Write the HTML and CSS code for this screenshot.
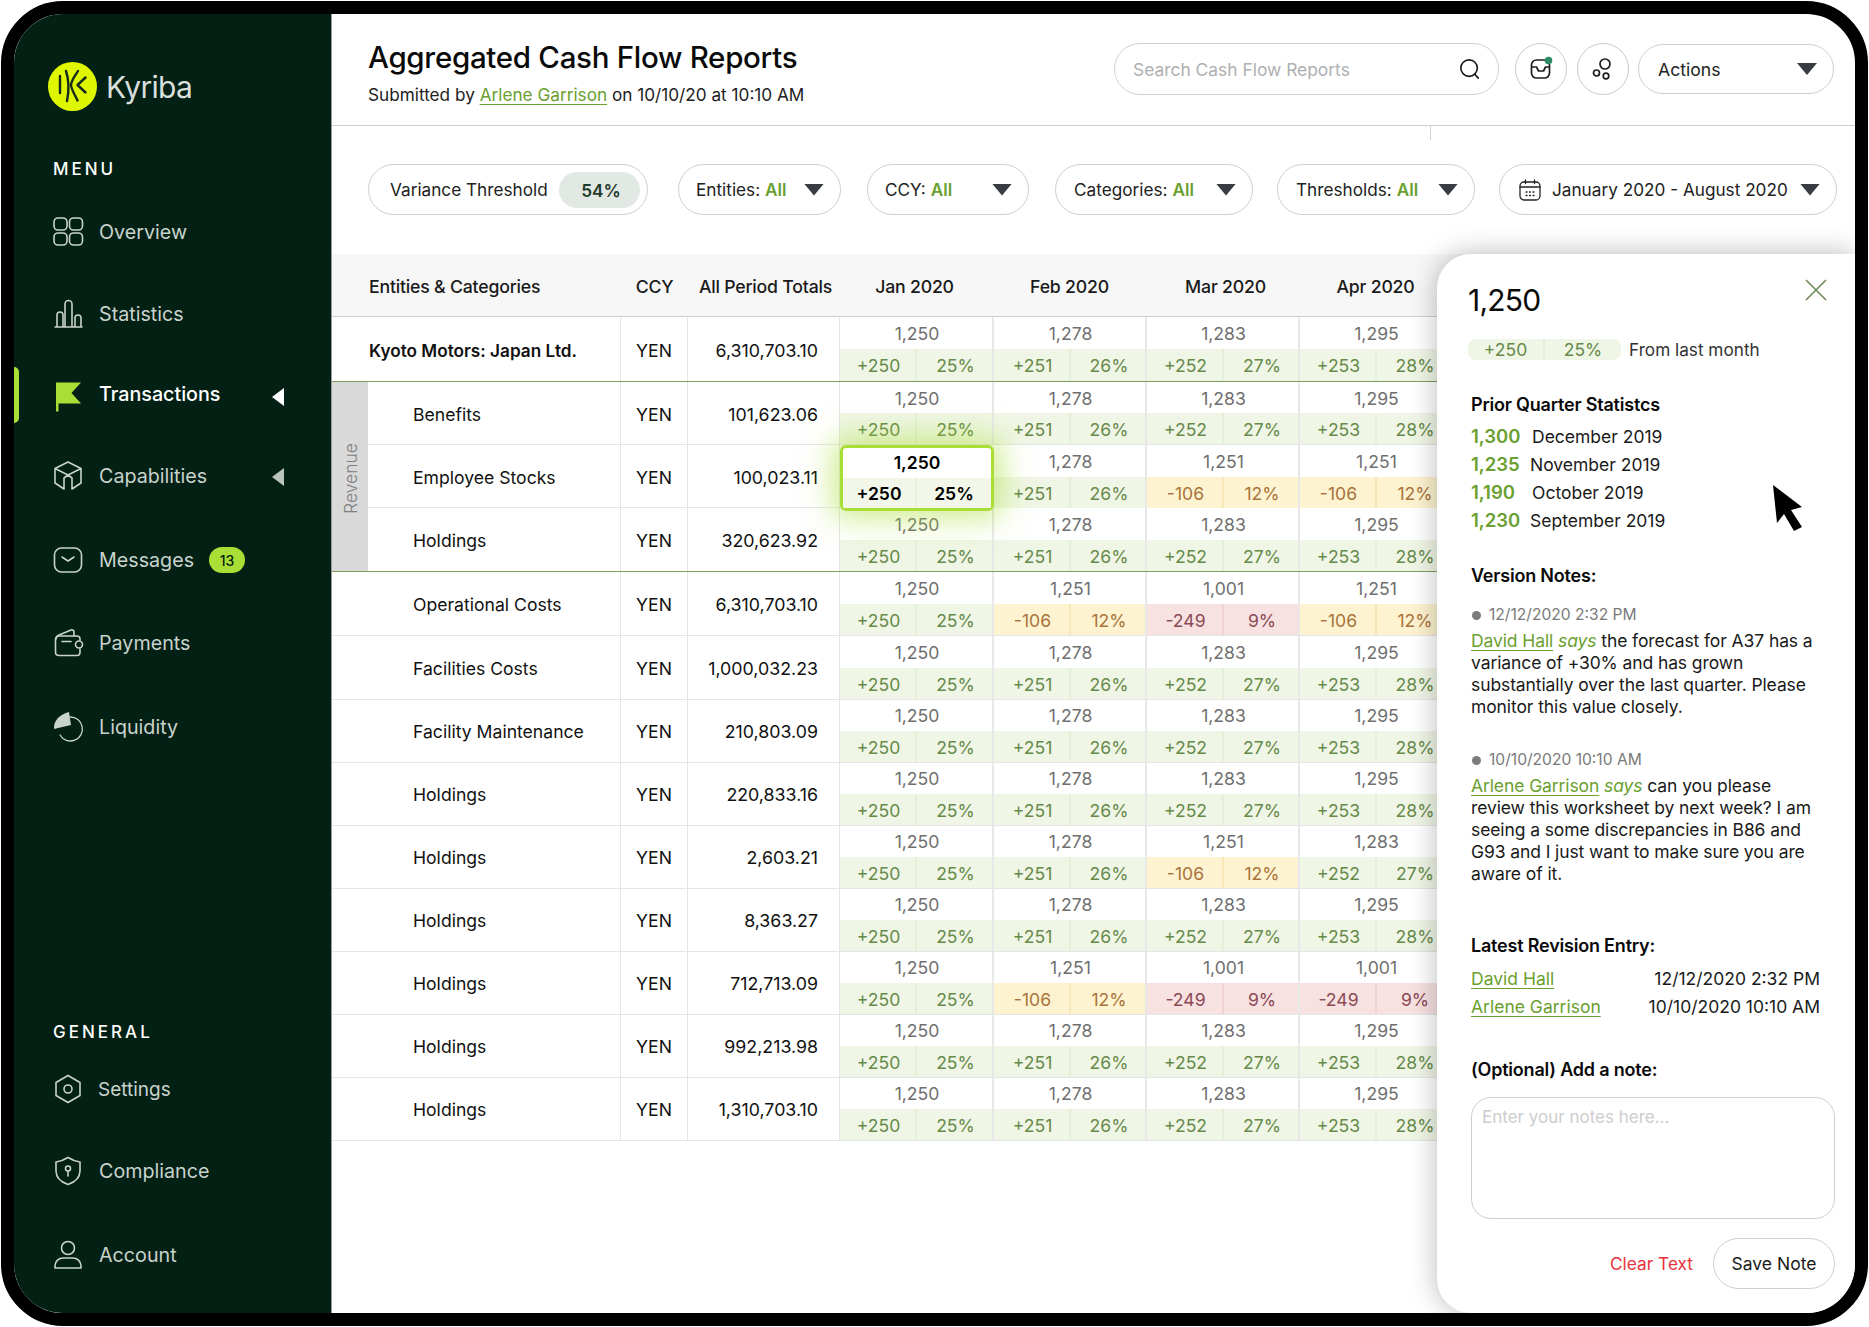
FILE: index.html
```html
<!DOCTYPE html>
<html lang="en">
<head>
<meta charset="utf-8">
<title>Aggregated Cash Flow Reports</title>
<link rel="stylesheet" href="styles.css">
</head>
<body>
<div class="device">
  <aside class="sidebar">
    <div class="brand">
      <svg class="logo" viewBox="0 0 49 49"><circle cx="24.5" cy="24.5" r="24.5" fill="#def700"/><g fill="none" stroke="#17291f" stroke-width="2.4" stroke-linecap="round" stroke-linejoin="round"><path d="M12 14v17"/><path d="M18 9c3 9 3 20 1 30"/><path d="M30 9c-3 5-6.500 9-7 14 .5 5 4 10 6.500 15.500"/><path d="M37.500 15.500 29.500 23l8 7.500"/></g></svg>
      <span class="brand-name">Kyriba</span>
    </div>
    <div class="nav-title">MENU</div>
    <nav class="nav nav-main">
      <a class="nav-item"><svg class="ico" viewBox="0 0 30 30"><rect x="1" y="1" width="13" height="12" rx="4"/><rect x="16.500" y="1" width="13" height="12" rx="4"/><rect x="1" y="16" width="13" height="12" rx="4"/><rect x="16.500" y="16" width="13" height="12" rx="4"/></svg>Overview</a>
      <a class="nav-item"><svg class="ico" viewBox="0 0 30 30"><path d="M2 28h27M4 28V16a3 3 0 0 1 6 0v12M12 28V5a3.500 3.500 0 0 1 7 0v23M22 28V19a2.500 2.500 0 0 1 6 0v9"/></svg>Statistics</a>
      <a class="nav-item nav-active"><span class="active-bar"></span><svg class="ico ico-flag" viewBox="0 0 30 30"><path d="M3 3.500H28L18.500 14 28 24.500H5.500V32.500H3z"/></svg>Transactions<span class="tri tri-on"></span></a>
      <a class="nav-item"><svg class="ico" viewBox="0 0 30 30"><path d="M15 1 28 7.500 15 14 2 7.500zM2 7.500V22l9 6V17M28 7.500V22l-9 6V17M11 17l4-3 4 3"/></svg>Capabilities<span class="tri"></span></a>
      <a class="nav-item"><svg class="ico" viewBox="0 0 30 30"><rect x="1.500" y="3" width="27" height="24" rx="7"/><path d="m9 12 6 4 6-4"/></svg>Messages<span class="badge">13</span></a>
      <a class="nav-item"><svg class="ico" viewBox="0 0 30 30"><path d="M3 11c0-2 1-3 3-4l12-5c1.500-.5 3 .5 3 2v4"/><path d="M27 12V11c0-2-1.500-3-3.500-3H6c-2 0-3.500 1.500-3.500 3.500V24c0 2 1.500 3.500 3.500 3.500h18c2 0 3-1.500 3-3.500v-3"/><circle cx="26" cy="16.500" r="3.500"/><path d="M9 13.500h9"/></svg>Payments</a>
      <a class="nav-item"><svg class="ico ico-pie" viewBox="0 0 30 30"><path class="pie-ring" d="M17 5a12 12 0 1 1-10 18"/><path class="pie-fill" d="M16 0 18 13 1 17C0 9 7 2 16 0z"/></svg>Liquidity</a>
    </nav>
    <div class="nav-title nav-title-general">GENERAL</div>
    <nav class="nav nav-general">
      <a class="nav-item"><svg class="ico" viewBox="0 0 30 30"><path d="m15 1.500 12 7v13l-12 7-12-7v-13z"/><circle cx="15" cy="15" r="4"/></svg><span class="nudge">Settings</span></a>
      <a class="nav-item"><svg class="ico" viewBox="0 0 30 30"><path d="M15 1.500c4 2.500 8 4 12 4.500v9c0 6-5 11-12 13.500C8 26 3 21 3 15V6c4-.5 8-2 12-4.500z"/><circle cx="15" cy="12.500" r="2.500"/><path d="M15 15v5"/></svg>Compliance</a>
      <a class="nav-item"><svg class="ico" viewBox="0 0 30 30"><circle cx="15" cy="8" r="6.500"/><path d="M2 28v-2c0-5 4-8 8-8h10c4 0 8 3 8 8v2z"/></svg>Account</a>
    </nav>
  </aside>

  <main class="main">
    <header class="topbar">
      <div class="heading">
        <h1 class="title">Aggregated Cash Flow Reports</h1>
        <p class="subtitle">Submitted by <a class="link">Arlene Garrison</a> on 10/10/20 at 10:10 AM</p>
      </div>
      <div class="search"><span class="search-text">Search Cash Flow Reports</span><svg class="search-ico" viewBox="0 0 24 24"><circle cx="11" cy="11" r="9"/><path d="m17.500 18 3.500 4"/></svg></div>
      <button class="round"><svg class="round-ico" viewBox="0 0 26 26"><path d="M3.500 9a5 5 0 0 1 5-5h8a5 5 0 0 1 5 5v8a5 5 0 0 1-5 5h-8a5 5 0 0 1-5-5z"/><path d="M3.500 11h5l2 4h5l2-4h4"/><circle class="dot" cx="20.500" cy="4.500" r="3.800"/></svg></button>
      <button class="round"><svg class="round-ico" viewBox="0 0 26 26"><circle cx="15" cy="8" r="5"/><circle cx="6.500" cy="17" r="3"/><circle cx="16" cy="20" r="2.800"/></svg></button>
      <button class="pill actions">Actions<span class="caret caret-end"></span></button>
    </header>
    <div class="tick"></div>

    <section class="filters">
      <div class="pill f-var">Variance Threshold<span class="pct">54%</span></div>
      <div class="pill f-ent">Entities: <b class="all">All</b><span class="caret"></span></div>
      <div class="pill f-ccy">CCY: <b class="all">All</b><span class="caret"></span></div>
      <div class="pill f-cat">Categories: <b class="all">All</b><span class="caret"></span></div>
      <div class="pill f-thr">Thresholds: <b class="all">All</b><span class="caret"></span></div>
      <div class="pill f-date"><svg class="cal" viewBox="0 0 22 22"><rect x="1" y="3" width="20" height="18" rx="4"/><path d="M1 8h20M6.500 1v3.500M15.500 1v3.500M7 13h1M10.500 13h1M14 13h1M7 16.500h1M10.500 16.500h1M14 16.500h1"/></svg>January 2020 - August 2020<span class="caret"></span></div>
    </section>

    <section class="table">
      <div class="row head">
        <div class="hc hc-name">Entities &amp; Categories</div><div class="hc">CCY</div><div class="hc">All Period Totals</div><div class="hc">Jan 2020</div><div class="hc">Feb 2020</div><div class="hc">Mar 2020</div><div class="hc">Apr 2020</div>
      </div>
      <div class="row r-65 low">
        <div class="c name strong">Kyoto Motors: Japan Ltd.</div><div class="c ccy">YEN</div><div class="c total">6,310,703.10</div>
        <div class="m"><div class="v">1,250</div><div class="d"><span>+250</span><span>25%</span></div></div>
        <div class="m"><div class="v">1,278</div><div class="d"><span>+251</span><span>26%</span></div></div>
        <div class="m"><div class="v">1,283</div><div class="d"><span>+252</span><span>27%</span></div></div>
        <div class="m"><div class="v">1,295</div><div class="d"><span>+253</span><span>28%</span></div></div>
      </div>
      <div class="group">
        <div class="group-label"><span class="group-text">Revenue</span></div>
        <div class="group-rows">
          <div class="row sub low">
            <div class="c name">Benefits</div><div class="c ccy">YEN</div><div class="c total">101,623.06</div>
            <div class="m"><div class="v">1,250</div><div class="d"><span>+250</span><span>25%</span></div></div>
            <div class="m"><div class="v">1,278</div><div class="d"><span>+251</span><span>26%</span></div></div>
            <div class="m"><div class="v">1,283</div><div class="d"><span>+252</span><span>27%</span></div></div>
            <div class="m"><div class="v">1,295</div><div class="d"><span>+253</span><span>28%</span></div></div>
          </div>
          <div class="row sub low">
            <div class="c name">Employee Stocks</div><div class="c ccy">YEN</div><div class="c total">100,023.11</div>
            <div class="m selected"><div class="v">1,250</div><div class="d"><span>+250</span><span>25%</span></div></div>
            <div class="m"><div class="v">1,278</div><div class="d"><span>+251</span><span>26%</span></div></div>
            <div class="m"><div class="v">1,251</div><div class="d warn"><span>-106</span><span>12%</span></div></div>
            <div class="m"><div class="v">1,251</div><div class="d warn"><span>-106</span><span>12%</span></div></div>
          </div>
          <div class="row sub r-64 last low">
            <div class="c name">Holdings</div><div class="c ccy">YEN</div><div class="c total">320,623.92</div>
            <div class="m"><div class="v">1,250</div><div class="d"><span>+250</span><span>25%</span></div></div>
            <div class="m"><div class="v">1,278</div><div class="d"><span>+251</span><span>26%</span></div></div>
            <div class="m"><div class="v">1,283</div><div class="d"><span>+252</span><span>27%</span></div></div>
            <div class="m"><div class="v">1,295</div><div class="d"><span>+253</span><span>28%</span></div></div>
          </div>
        </div>
      </div>
      <div class="row r-64 low">
        <div class="c name indent">Operational Costs</div><div class="c ccy">YEN</div><div class="c total">6,310,703.10</div>
        <div class="m"><div class="v">1,250</div><div class="d"><span>+250</span><span>25%</span></div></div>
        <div class="m"><div class="v">1,251</div><div class="d warn"><span>-106</span><span>12%</span></div></div>
        <div class="m"><div class="v">1,001</div><div class="d bad"><span>-249</span><span>9%</span></div></div>
        <div class="m"><div class="v">1,251</div><div class="d warn"><span>-106</span><span>12%</span></div></div>
      </div>
      <div class="row r-64 low">
        <div class="c name indent">Facilities Costs</div><div class="c ccy">YEN</div><div class="c total">1,000,032.23</div>
        <div class="m"><div class="v">1,250</div><div class="d"><span>+250</span><span>25%</span></div></div>
        <div class="m"><div class="v">1,278</div><div class="d"><span>+251</span><span>26%</span></div></div>
        <div class="m"><div class="v">1,283</div><div class="d"><span>+252</span><span>27%</span></div></div>
        <div class="m"><div class="v">1,295</div><div class="d"><span>+253</span><span>28%</span></div></div>
      </div>
      <div class="row">
        <div class="c name indent">Facility Maintenance</div><div class="c ccy">YEN</div><div class="c total">210,803.09</div>
        <div class="m"><div class="v">1,250</div><div class="d"><span>+250</span><span>25%</span></div></div>
        <div class="m"><div class="v">1,278</div><div class="d"><span>+251</span><span>26%</span></div></div>
        <div class="m"><div class="v">1,283</div><div class="d"><span>+252</span><span>27%</span></div></div>
        <div class="m"><div class="v">1,295</div><div class="d"><span>+253</span><span>28%</span></div></div>
      </div>
      <div class="row">
        <div class="c name indent">Holdings</div><div class="c ccy">YEN</div><div class="c total">220,833.16</div>
        <div class="m"><div class="v">1,250</div><div class="d"><span>+250</span><span>25%</span></div></div>
        <div class="m"><div class="v">1,278</div><div class="d"><span>+251</span><span>26%</span></div></div>
        <div class="m"><div class="v">1,283</div><div class="d"><span>+252</span><span>27%</span></div></div>
        <div class="m"><div class="v">1,295</div><div class="d"><span>+253</span><span>28%</span></div></div>
      </div>
      <div class="row">
        <div class="c name indent">Holdings</div><div class="c ccy">YEN</div><div class="c total">2,603.21</div>
        <div class="m"><div class="v">1,250</div><div class="d"><span>+250</span><span>25%</span></div></div>
        <div class="m"><div class="v">1,278</div><div class="d"><span>+251</span><span>26%</span></div></div>
        <div class="m"><div class="v">1,251</div><div class="d warn"><span>-106</span><span>12%</span></div></div>
        <div class="m"><div class="v">1,283</div><div class="d"><span>+252</span><span>27%</span></div></div>
      </div>
      <div class="row">
        <div class="c name indent">Holdings</div><div class="c ccy">YEN</div><div class="c total">8,363.27</div>
        <div class="m"><div class="v">1,250</div><div class="d"><span>+250</span><span>25%</span></div></div>
        <div class="m"><div class="v">1,278</div><div class="d"><span>+251</span><span>26%</span></div></div>
        <div class="m"><div class="v">1,283</div><div class="d"><span>+252</span><span>27%</span></div></div>
        <div class="m"><div class="v">1,295</div><div class="d"><span>+253</span><span>28%</span></div></div>
      </div>
      <div class="row">
        <div class="c name indent">Holdings</div><div class="c ccy">YEN</div><div class="c total">712,713.09</div>
        <div class="m"><div class="v">1,250</div><div class="d"><span>+250</span><span>25%</span></div></div>
        <div class="m"><div class="v">1,251</div><div class="d warn"><span>-106</span><span>12%</span></div></div>
        <div class="m"><div class="v">1,001</div><div class="d bad"><span>-249</span><span>9%</span></div></div>
        <div class="m"><div class="v">1,001</div><div class="d bad"><span>-249</span><span>9%</span></div></div>
      </div>
      <div class="row">
        <div class="c name indent">Holdings</div><div class="c ccy">YEN</div><div class="c total">992,213.98</div>
        <div class="m"><div class="v">1,250</div><div class="d"><span>+250</span><span>25%</span></div></div>
        <div class="m"><div class="v">1,278</div><div class="d"><span>+251</span><span>26%</span></div></div>
        <div class="m"><div class="v">1,283</div><div class="d"><span>+252</span><span>27%</span></div></div>
        <div class="m"><div class="v">1,295</div><div class="d"><span>+253</span><span>28%</span></div></div>
      </div>
      <div class="row">
        <div class="c name indent">Holdings</div><div class="c ccy">YEN</div><div class="c total">1,310,703.10</div>
        <div class="m"><div class="v">1,250</div><div class="d"><span>+250</span><span>25%</span></div></div>
        <div class="m"><div class="v">1,278</div><div class="d"><span>+251</span><span>26%</span></div></div>
        <div class="m"><div class="v">1,283</div><div class="d"><span>+252</span><span>27%</span></div></div>
        <div class="m"><div class="v">1,295</div><div class="d"><span>+253</span><span>28%</span></div></div>
      </div>
    </section>

    <aside class="panel">
      <div class="panel-head">
        <div class="panel-value">1,250</div>
        <svg class="close" viewBox="0 0 22 22"><path d="m1 1 20 20M21 1 1 21"/></svg>
      </div>
      <div class="delta-line"><div class="delta-pill"><span>+250</span><span>25%</span></div><span class="from">From last month</span></div>
      <h3 class="ph ph-prior">Prior Quarter Statistcs</h3>
      <div class="stats">
        <div class="stat"><b>1,300</b><span>December 2019</span></div>
        <div class="stat stat-tight"><b>1,235</b><span>November 2019</span></div>
        <div class="stat"><b>1,190</b><span>October 2019</span></div>
        <div class="stat stat-tight"><b>1,230</b><span>September 2019</span></div>
      </div>
      <h3 class="ph ph-notes">Version Notes:</h3>
      <div class="note-date note-date-1"><i class="bullet"></i>12/12/2020 2:32 PM</div>
      <p class="note"><a class="link">David Hall</a> <em class="says">says</em> the forecast for A37 has a<br>variance of +30% and has grown<br>substantially over the last quarter. Please<br>monitor this value closely.</p>
      <div class="note-date note-date-2"><i class="bullet"></i>10/10/2020 10:10 AM</div>
      <p class="note"><a class="link">Arlene Garrison</a> <em class="says">says</em> can you please<br>review this worksheet by next week? I am<br>seeing a some discrepancies in B86 and<br>G93 and I just want to make sure you are<br>aware of it.</p>
      <h3 class="ph ph-rev">Latest Revision Entry:</h3>
      <div class="rev"><a class="link">David Hall</a><span>12/12/2020 2:32 PM</span></div>
      <div class="rev"><a class="link">Arlene Garrison</a><span>10/10/2020 10:10 AM</span></div>
      <h3 class="ph ph-add">(Optional) Add a note:</h3>
      <div class="textarea">Enter your notes here...</div>
      <div class="panel-actions"><span class="clear">Clear Text</span><button class="save">Save Note</button></div>
      <svg class="cursor" viewBox="0 0 30 46"><path d="M0 0 29 22 18 25 29 42 21 46 11 29 4 38z"/></svg>
    </aside>
  </main>
</div>
</body>
</html>
```
FILE: styles.css
```css
* { box-sizing: border-box; }
html, body { margin: 0; padding: 0; background: #fff; }
body { font-family: Inter, "Liberation Sans", sans-serif; color: #111; font-size: 17.5px; }
button { font: inherit; color: inherit; background: none; }
h1, h3, p { margin: 0; }

.device {
  width: 1867px; height: 1325px; margin: 1px;
  border: 13px solid #000; border-radius: 62px;
  background: #fff; display: flex; overflow: hidden;
}

/* Sidebar */
.sidebar { width: 317px; flex: none; background: #032014; padding: 48px 0 37px 0; display: flex; flex-direction: column; position: relative; }
.brand { display: flex; align-items: center; padding-left: 34px; height: 49px; gap: 9px; }
.logo { width: 49px; height: 49px; flex: none; }
.brand-name { font-size: 30px; color: #d9dfdb; letter-spacing: -.7px; font-weight: 400; }
.nav-title { color: #fff; font-size: 17px; font-weight: 500; letter-spacing: 3px; padding-left: 39px; margin-top: 47px; line-height: 22px; }
.nav-title-general { margin-top: auto; }
.nav { display: grid; }
.nav-main { grid-template-rows: 82px 80px 82px 84px 83px 84px 42px; margin-top: 31px; }
.nav-general { grid-template-rows: 82px 84px 42px; margin-top: 25px; }
.nav-item { display: flex; align-items: center; color: #c9d3cd; font-size: 19.7px; padding-left: 39px; position: relative; height: 42px; align-self: start; }
.ico { width: 30px; height: 30px; flex: none; margin-right: 16px; fill: none; stroke: #c9d3cd; stroke-width: 1.6; stroke-linecap: round; stroke-linejoin: round; overflow: visible; }
.nav-active { color: #fff; font-weight: 500; }
.active-bar { width: 5px; height: 56px; background: #a9de37; border-radius: 0 5px 5px 0; position: absolute; left: 0; top: -6px; }
.ico-flag { fill: #a9de37; stroke: none; }
.pie-ring { stroke-width: 1.3; }
.pie-fill { fill: #c9d3cd; stroke: none; }
.nudge { margin-left: -1px; font-size: 19px; }
.tri { width: 0; height: 0; border-style: solid; border-width: 9px 12px 9px 0; border-color: transparent #b9c4bd transparent transparent; position: absolute; left: 258px; top: 13px; }
.tri-on { border-right-color: #fff; top: 15px; }
.badge { background: #a9de37; color: #04200f; font-size: 14px; font-weight: 500; border-radius: 13px; width: 36px; height: 26px; display: flex; align-items: center; justify-content: center; margin-left: 15px; }

/* Main */
.main { flex: 1; border-left: 1px solid #9a9a9a; position: relative; min-width: 0; }
.topbar { height: 112px; border-bottom: 1px solid #cfcfcf; display: flex; align-items: flex-start; padding: 28px 21px 0 36px; }
.heading { margin-right: auto; }
.title { font-size: 29.5px; font-weight: 500; letter-spacing: -.3px; line-height: 30px; color: #0a0a0a; }
.subtitle { font-size: 17.2px; line-height: 22px; margin-top: 12px; color: #222; }
.link { color: #6aa030; text-decoration: underline; text-underline-offset: 3px; text-decoration-thickness: 1px; }
.search { width: 385px; height: 52px; margin-top: 1px; border: 1px solid #cfd2d4; border-radius: 26px; display: flex; align-items: center; justify-content: space-between; padding: 0 17px 0 18px; }
.search-text { color: #aeb0b2; font-size: 17.4px; }
.search-ico { width: 22px; height: 22px; fill: none; stroke: #1a1a1a; stroke-width: 1.8; stroke-linecap: round; }
.round { width: 52px; height: 52px; margin-top: 1px; border: 1px solid #c9cbcc; border-radius: 50%; margin-left: 16px; padding: 0; display: flex; align-items: center; justify-content: center; }
.round + .round { margin-left: 10px; }
.round-ico { width: 26px; height: 26px; fill: none; stroke: #1d1d1d; stroke-width: 1.7; stroke-linejoin: round; }
.dot { fill: #2d8a66; stroke: none; }
.pill { border: 1px solid #cfcfcf; border-radius: 26px; height: 51px; display: flex; align-items: center; position: relative; background: #fff; color: #222; font-size: 17.2px; }
.actions { width: 196px; margin-left: 9px; margin-top: 2px; height: 50px; padding: 0 0 0 19px; font-size: 17.6px; }
.caret { width: 20px; height: 12px; background: #383d44; clip-path: polygon(0 0, 100% 0, 50% 100%); margin-left: auto; margin-right: 16px; flex: none; }
.tick { width: 1px; height: 14px; background: #d4d4d4; margin-left: 1098px; }

.filters { display: flex; padding: 38px 0 0 36px; height: 128px; margin-top: -14px; align-items: flex-start; }
.all { color: #6aa030; font-weight: 600; margin-left: 5px; }
.f-var { width: 280px; padding-left: 21px; margin-right: 30px; }
.pct { width: 81px; height: 36px; padding-left: 3px; background: #e2e8e3; color: #1e3a2a; font-weight: 600; border-radius: 18px; display: flex; align-items: center; justify-content: center; position: absolute; right: 7px; top: 7px; }
.f-ent { width: 163px; padding-left: 17px; margin-right: 26px; }
.f-ccy { width: 162px; padding-left: 17px; margin-right: 26px; }
.f-cat { width: 198px; padding-left: 18px; margin-right: 24px; }
.f-thr { width: 198px; padding-left: 18px; margin-right: 24px; }
.f-date { width: 338px; padding-left: 19px; }
.cal { width: 22px; height: 22px; margin-right: 11px; fill: none; stroke: #222; stroke-width: 1.3; stroke-linecap: round; flex: none; }

/* Table */
.row { display: grid; grid-template-columns: 289px 67px 152px 154px 153px 153px 153px; height: 63px; border-bottom: 1px solid #e5e5e5; width: 100%; font-size: 17.6px; }
.r-64 { height: 64px; }
.r-65 { height: 65px; border-bottom: 1px solid #7c9f5c; }
.head { background: #f7f7f7; border-bottom: 1px solid #cfcfcf; height: 63px; font-weight: 500; padding-top: 3px; }
.hc { display: flex; align-items: center; justify-content: center; color: #1a1a1a; font-size: 17.7px; letter-spacing: -.2px; white-space: nowrap; }
.hc-name { justify-content: flex-start; padding-left: 37px; }
.hc:nth-child(3) { padding-left: 3px; }
.hc:nth-child(4) { padding-right: 5px; }
.hc:nth-child(5) { padding-right: 2px; }
.hc:nth-child(6) { padding-left: 4px; }
.hc:nth-child(7) { padding-right: 2px; }
.c { display: flex; align-items: center; border-right: 1px solid #e5e5e5; color: #111; }
.name { padding-left: 37px; }
.strong { font-weight: 600; font-size: 17.2px; }
.indent { padding-left: 81px; }
.ccy { justify-content: center; }
.total { justify-content: flex-end; padding-right: 21px; font-size: 17.8px; }
.low .c, .low .v { padding-top: 1px; }
.r-65 .c, .group-rows .row:first-child .c { padding-top: 3px; }
.m { display: flex; flex-direction: column; border-right: 2px solid #e8e8e8; position: relative; }
.v { flex: 1; display: flex; align-items: center; justify-content: center; color: #6f6f6f; padding-left: 2px; }
.low .v { padding-left: 2px; }
.d { height: 31px; display: grid; grid-template-columns: 77px 1fr; background: #f0f6e6; color: #668a4a; }
.r-65 .d { height: 32px; }
.d span { display: flex; align-items: center; justify-content: center; padding: 1px 0 0 2px; }
.d span:first-child { border-right: 2px solid #e6efd9; }
.warn { background: #fdf3d0; color: #a9733b; }
.warn span:first-child { border-right-color: #f7e7b8; }
.bad { background: #f7e1e1; color: #8b4a55; }
.bad span:first-child { border-right-color: #f0d2d2; }
.group { display: flex; border-bottom: 1px solid #7c9f5c; }
.group-label { width: 36px; flex: none; background: #d9d9d9; display: flex; align-items: center; justify-content: center; padding-top: 4px; }
.group-text { writing-mode: vertical-rl; transform: rotate(180deg); font-size: 17.5px; font-weight: 300; color: #7f7f7f; }
.group-rows { flex: 1; min-width: 0; }
.sub { grid-template-columns: 253px 67px 152px 154px 153px 153px 153px; }
.sub .name { padding-left: 45px; }
.last { border-bottom: none; height: 63px; }
.selected { border: 3px solid #a9de37; border-radius: 6px; height: 66px; margin-bottom: -3px; background: #fff; box-shadow: 0 0 30px 8px rgba(169, 222, 55, .55); z-index: 2; }
.selected .v { color: #000; font-weight: 600; padding: 0 0 2px; }
.selected .d { color: #000; font-weight: 600; height: 30px; grid-template-columns: 74px 1fr; background: #f2f7e9; }
.selected .d span { padding: 0; }
.selected .d span:first-child { border-right-color: #e9f1dd; }

/* Panel */
.panel { position: absolute; left: 1105px; top: 240px; width: 418px; height: 1059px; background: #fff; border-radius: 34px 0 0 34px; box-shadow: 0 0 28px rgba(0, 0, 0, .28); padding: 27px 20px 0 34px; z-index: 5; }
.panel-head { display: flex; justify-content: space-between; margin-left: -3px; height: 45px; align-items: flex-start; padding-right: 8px; }
.panel-value { font-size: 30px; letter-spacing: -.8px; line-height: 38px; color: #0a0a0a; }
.close { width: 22px; height: 22px; fill: none; stroke: #6b8a58; stroke-width: 1.6; margin-top: -2px; }
.delta-line { display: flex; align-items: center; margin: 13px 0 0 -3px; height: 21px; }
.delta-pill { width: 153px; height: 21px; background: #f0f6e6; border-radius: 8px; color: #668a4a; display: grid; grid-template-columns: 77px 1fr; }
.delta-pill span { display: flex; align-items: center; justify-content: center; }
.delta-pill span:first-child { border-right: 2px solid #e4edd6; }
.from { margin-left: 8px; color: #333; font-size: 17.2px; }
.ph { font-size: 18px; font-weight: 600; line-height: 22px; color: #0a0a0a; letter-spacing: -.2px; }
.ph-prior { margin-top: 34px; }
.stats { margin-top: 6px; }
.stat { display: grid; grid-template-columns: 61px 1fr; height: 28px; align-items: center; color: #1a1a1a; }
.stat-tight { grid-template-columns: 59px 1fr; }
.stat b { color: #6aa030; font-weight: 600; font-size: 18.5px; }
.ph-notes { margin-top: 31px; }
.note-date { display: flex; align-items: center; color: #7a7a7a; font-size: 15.6px; line-height: 20px; }
.note-date-1 { margin-top: 18px; }
.note-date-2 { margin-top: 32px; }
.bullet { width: 9px; height: 9px; border-radius: 50%; background: #7c7c7c; margin: 0 8px 0 1px; }
.note { font-size: 17.5px; line-height: 22px; color: #1a1a1a; margin-top: 5px; letter-spacing: -.1px; white-space: nowrap; }
.says { color: #6aa030; }
.ph-rev { margin-top: 50px; }
.rev { display: flex; justify-content: space-between; height: 28px; align-items: center; margin-top: 0; padding-right: 15px; color: #1a1a1a; }
.ph-rev + .rev { margin-top: 7px; }
.ph-add { margin-top: 39px; }
.textarea { width: 364px; height: 122px; margin-top: 16px; border: 1px solid #cfcfcf; border-radius: 20px; padding: 9px 10px; color: #cdcdcd; font-size: 17px; }
.panel-actions { display: flex; justify-content: flex-end; align-items: center; margin-top: 19px; width: 364px; }
.clear { color: #e8323c; margin-right: 20px; font-size: 17.3px; }
.save { width: 122px; height: 51px; border: 1px solid #cfcfcf; border-radius: 26px; padding: 0; color: #1a1a1a; }
.cursor { position: absolute; left: 336px; top: 231px; width: 30px; height: 46px; fill: #000; }
```
